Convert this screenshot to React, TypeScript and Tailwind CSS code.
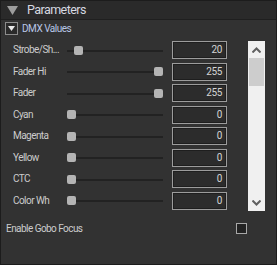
const rows = [
  { label: 'Strobe/Sh...', value: 20 },
  { label: 'Fader Hi', value: 255 },
  { label: 'Fader', value: 255 },
  { label: 'Cyan', value: 0 },
  { label: 'Magenta', value: 0 },
  { label: 'Yellow', value: 0 },
  { label: 'CTC', value: 0 },
  { label: 'Color Wh', value: 0 },
]

function Slider({ value }: { value: number }) {
  const left = Math.round((value / 255) * 87)
  return (
    <div className="relative w-[96px] h-[9px] shrink-0">
      <div className="absolute left-0 right-0 top-[4px] h-[2px] bg-[#222222]" />
      <div
        className="absolute top-0 w-[9px] h-[9px] rounded-[2px] bg-[#b4b4b4]"
        style={{ left }}
      />
    </div>
  )
}

function Chevron({ up }: { up?: boolean }) {
  return (
    <svg width="9" height="6" viewBox="0 0 9 6" className={up ? '' : 'rotate-180'}>
      <path d="M0.5 5.5 L4.5 1.5 L8.5 5.5" fill="none" stroke="#606060" strokeWidth="2" />
    </svg>
  )
}

export default function App() {
  return (
    <div className="w-[277px] h-[265px] border border-[#1c1c1c] bg-[#323232] flex flex-col text-[#cccccc] overflow-hidden font-['Roboto',sans-serif]">
      {/* panel header */}
      <div className="h-[19px] shrink-0 bg-[#2a2a2a] border-b border-[#1f1f1f] flex items-center">
        <svg width="11" height="9" viewBox="0 0 11 9" className="ml-[6px]">
          <path d="M0 0 H11 L5.5 9 Z" fill="#9c9c9c" />
        </svg>
        <span className="ml-[9px] text-[12.5px] tracking-[-0.55px] leading-none text-[#d6d8e0]">Parameters</span>
      </div>

      {/* group header */}
      <div className="mt-[2px] ml-[4px] flex items-center h-[13px]">
        <div className="w-[13px] h-[13px] border border-[#8c8c8c] bg-[#2a2a2a] flex items-center justify-center">
          <svg width="7" height="5" viewBox="0 0 7 5">
            <path d="M0 0 H7 L3.5 5 Z" fill="#e8e8e8" />
          </svg>
        </div>
        <span className="ml-[4px] text-[10px] tracking-[-0.5px] leading-none text-[#b8c6e6]">DMX Values</span>
      </div>

      {/* list */}
      <div className="mt-[6px] flex h-[170px] shrink-0">
        <div className="flex flex-col gap-[3.5px] pl-[12px]">
          {rows.map((r) => (
            <div key={r.label} className="flex items-center h-[18px]">
              <span className="w-[54px] text-[10px] tracking-[-0.55px] leading-none whitespace-nowrap">{r.label}</span>
              <Slider value={r.value} />
              <div className="ml-[9px] w-[55px] h-[18px] border border-[#9c9c9c] bg-[#2c2c2c] shadow-[inset_0_0_0_1px_#1e1e1e] flex items-center justify-end pr-[4px] text-[10px] tracking-[-0.4px] leading-none text-[#d4d4d4]">
                {r.value}
              </div>
            </div>
          ))}
        </div>
        <div className="ml-[21px] w-[17px] h-[170px] bg-[#f0f0f0] flex flex-col">
          <div className="h-[17px] flex items-center justify-center">
            <Chevron up />
          </div>
          <div className="mx-[1px] h-[28px] bg-[#cdcdcd]" />
          <div className="flex-1" />
          <div className="h-[17px] flex items-center justify-center">
            <Chevron />
          </div>
        </div>
      </div>

      {/* footer option */}
      <div className="mt-[12px] flex items-center justify-between h-[11px] pl-[5px] pr-[29px]">
        <span className="text-[10px] tracking-[-0.55px] leading-none">Enable Gobo Focus</span>
        <div className="w-[11px] h-[11px] border border-[#a8a8a8] bg-[#222222]" />
      </div>
    </div>
  )
}
